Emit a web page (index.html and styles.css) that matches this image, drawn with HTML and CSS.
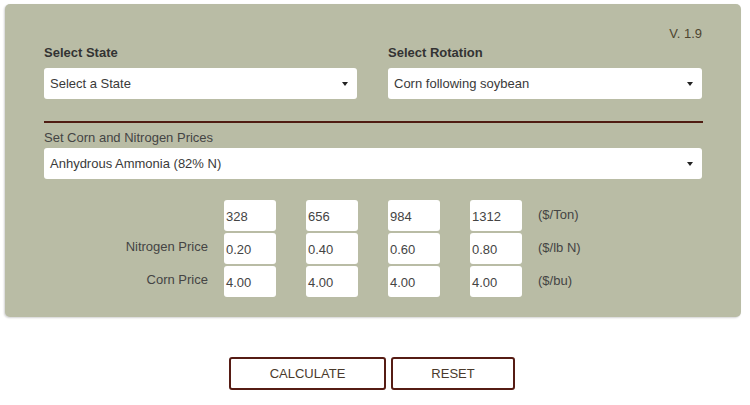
FILE: index.html
```html
<!DOCTYPE html>
<html>
<head>
<meta charset="utf-8">
<link rel="stylesheet" href="styles.css">
</head>
<body>
<div class="panel">
  <div class="version">V. 1.9</div>
  <div class="top-row">
    <div class="field">
      <div class="field-label">Select State</div>
      <div class="select">Select a State</div>
    </div>
    <div class="field">
      <div class="field-label">Select Rotation</div>
      <div class="select">Corn following soybean</div>
    </div>
  </div>
  <div class="divider"></div>
  <div class="section-label">Set Corn and Nitrogen Prices</div>
  <div class="select select-wide">Anhydrous Ammonia (82% N)</div>
  <div class="price-grid">
    <div class="row-label"></div>
    <div class="cell"><div class="box">328</div></div>
    <div class="cell"><div class="box">656</div></div>
    <div class="cell"><div class="box">984</div></div>
    <div class="cell"><div class="box">1312</div></div>
    <div class="unit">($/Ton)</div>

    <div class="row-label">Nitrogen Price</div>
    <div class="cell"><div class="box">0.20</div></div>
    <div class="cell"><div class="box">0.40</div></div>
    <div class="cell"><div class="box">0.60</div></div>
    <div class="cell"><div class="box">0.80</div></div>
    <div class="unit">($/lb N)</div>

    <div class="row-label">Corn Price</div>
    <div class="cell"><div class="box">4.00</div></div>
    <div class="cell"><div class="box">4.00</div></div>
    <div class="cell"><div class="box">4.00</div></div>
    <div class="cell"><div class="box">4.00</div></div>
    <div class="unit">($/bu)</div>
  </div>
</div>
<div class="actions">
  <button class="btn btn-calc">CALCULATE</button>
  <button class="btn btn-reset">RESET</button>
</div>
</body>
</html>
```
FILE: styles.css
```css
html, body {
  margin: 0;
  padding: 0;
  background: #ffffff;
  font-family: "Liberation Sans", Arial, sans-serif;
  font-size: 13px;
  color: #3a3a3a;
}

.panel {
  margin: 4px 9px 0 5px;
  width: 736px;
  box-sizing: border-box;
  padding: 22px 38px 20px 39px;
  background: #b9bca5;
  border-radius: 5px;
  box-shadow: -1px 1px 2px rgba(0, 0, 0, 0.18);
}

.version {
  text-align: right;
  font-size: 13px;
  line-height: 16px;
  color: #4e4530;
  padding-right: 1px;
}

.top-row {
  display: grid;
  grid-template-columns: 313px 314px;
  column-gap: 31px;
}

.field-label {
  margin-top: 4px;
  font-weight: bold;
  font-size: 13px;
  line-height: 14px;
  color: #333333;
}

.select {
  position: relative;
  margin-top: 8px;
  height: 31px;
  line-height: 31px;
  background: #ffffff;
  border-radius: 3px;
  padding-left: 6px;
  color: #3a3a3a;
  box-sizing: border-box;
}

.select::after {
  content: "";
  position: absolute;
  right: 9px;
  top: 14px;
  border-left: 3px solid transparent;
  border-right: 3px solid transparent;
  border-top: 4px solid #222222;
}

.select-wide {
  margin-top: 3px;
  width: 658px;
}

.divider {
  margin-top: 22px;
  height: 2px;
  background: #4f1c12;
  width: 659px;
}

.section-label {
  margin-top: 8px;
  line-height: 14px;
  color: #444444;
}

.price-grid {
  margin-top: 21px;
  display: grid;
  grid-template-columns: 180px 82px 82px 82px 52px auto;
  grid-auto-rows: 31px;
  row-gap: 2px;
}

.row-label {
  text-align: right;
  padding-right: 16px;
  line-height: 28px;
  color: #444444;
}

.box {
  width: 52px;
  height: 31px;
  line-height: 33px;
  box-sizing: border-box;
  padding-left: 2px;
  background: #ffffff;
  border-radius: 3px;
  color: #444444;
}

.unit {
  padding-left: 16px;
  line-height: 30px;
  color: #444444;
}

.actions {
  display: flex;
  justify-content: center;
  gap: 5px;
  margin-top: 40px;
  padding-right: 6px;
}

.btn {
  height: 33px;
  box-sizing: border-box;
  border: 2px solid #561c14;
  border-radius: 3px;
  background: #ffffff;
  font-family: "Liberation Sans", Arial, sans-serif;
  font-size: 13px;
  color: #4a3a2c;
  padding: 0;
}

.btn-calc {
  width: 157px;
}

.btn-reset {
  width: 124px;
}
```
